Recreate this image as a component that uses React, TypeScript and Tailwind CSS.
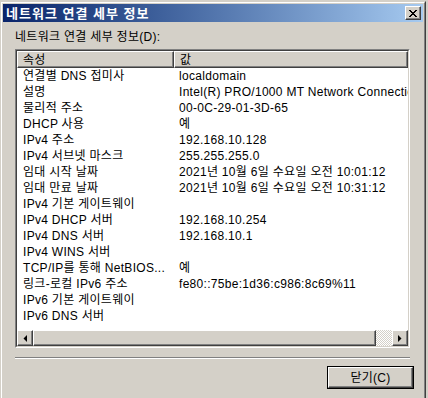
const rows: [string, string][] = [
  ["연결별 DNS 접미사", "localdomain"],
  ["설명", "Intel(R) PRO/1000 MT Network Connection"],
  ["물리적 주소", "00-0C-29-01-3D-65"],
  ["DHCP 사용", "예"],
  ["IPv4 주소", "192.168.10.128"],
  ["IPv4 서브넷 마스크", "255.255.255.0"],
  ["임대 시작 날짜", "2021년 10월 6일 수요일 오전 10:01:12"],
  ["임대 만료 날짜", "2021년 10월 6일 수요일 오전 10:31:12"],
  ["IPv4 기본 게이트웨이", ""],
  ["IPv4 DHCP 서버", "192.168.10.254"],
  ["IPv4 DNS 서버", "192.168.10.1"],
  ["IPv4 WINS 서버", ""],
  ["TCP/IP를 통해 NetBIOS...", "예"],
  ["링크-로컬 IPv6 주소", "fe80::75be:1d36:c986:8c69%11"],
  ["IPv6 기본 게이트웨이", ""],
  ["IPv6 DNS 서버", ""],
];

const raised =
  "border border-t-white border-l-white border-r-[#404040] border-b-[#404040] shadow-[inset_-1px_-1px_0_#808080]";

function ArrowButton({ dir }: { dir: "left" | "right" }) {
  return (
    <div className={`flex h-[16px] w-[16px] shrink-0 items-center justify-center bg-[#d4d0c8] ${raised}`}>
      <svg width="4" height="7" viewBox="0 0 4 7">
        {dir === "left" ? (
          <polygon points="4,0 4,7 0.5,3.5" fill="#000" />
        ) : (
          <polygon points="0,0 0,7 3.5,3.5" fill="#000" />
        )}
      </svg>
    </div>
  );
}

export default function App() {
  return (
    <div
      className="h-[398px] w-[428px] overflow-hidden bg-[#d4d0c8] text-[12px] tracking-[0.3px] text-black"
      style={{ fontFamily: '"Liberation Sans", "Noto Sans CJK KR", sans-serif' }}
    >
      <div className="mt-[1px] h-[420px] w-[426px] border border-t-[#d4d0c8] border-l-[#d4d0c8] border-r-[#404040] border-b-[#404040]">
        <div className="h-full w-full border border-t-white border-l-white border-r-[#808080] border-b-[#808080] p-[1px]">
          {/* title bar */}
          <div className="flex h-[18px] items-center justify-between bg-gradient-to-r from-[#0a246a] to-[#a6caf0] pl-[3px] pr-[2px]">
            <span className="text-[13px] font-bold leading-none tracking-[1px] text-white">
              네트워크 연결 세부 정보
            </span>
            <div className={`flex h-[14px] w-[16px] items-center justify-center bg-[#d4d0c8] ${raised}`}>
              <svg width="8" height="7" viewBox="0 0 8 7" shapeRendering="crispEdges">
                <path
                  d="M0 0h2v1h-2zM6 0h2v1h-2zM1 1h2v1h-2zM5 1h2v1h-2zM2 2h4v1h-4zM3 3h2v1h-2zM2 4h4v1h-4zM1 5h2v1h-2zM5 5h2v1h-2zM0 6h2v1h-2zM6 6h2v1h-2z"
                  fill="#000"
                />
              </svg>
            </div>
          </div>

          <div className="pl-[12px]">
            <div className="mt-[8px] h-[14px] leading-[14px]">네트워크 연결 세부 정보(D):</div>

            {/* list view */}
            <div className="mt-[5px] w-[395px] border border-t-[#808080] border-l-[#808080] border-r-white border-b-white">
              <div className="flex h-[297px] flex-col border border-t-[#404040] border-l-[#404040] border-r-[#d4d0c8] border-b-[#d4d0c8] bg-white">
                <div className="flex h-[17px] shrink-0">
                  <div className={`flex w-[157px] items-center bg-[#d4d0c8] pl-[5px] ${raised}`}>속성</div>
                  <div className={`flex flex-1 items-center bg-[#d4d0c8] pl-[5px] ${raised}`}>값</div>
                </div>
                <div className="flex-1 overflow-hidden">
                  {rows.map(([k, v]) => (
                    <div key={k} className="flex h-[16px] items-center whitespace-nowrap">
                      <div className="w-[157px] shrink-0 pl-[6px]">{k}</div>
                      <div className="pl-[5px]">{v}</div>
                    </div>
                  ))}
                </div>
                {/* horizontal scroll bar */}
                <div className="flex h-[16px] shrink-0">
                  <ArrowButton dir="left" />
                  <div className={`w-[343px] shrink-0 bg-[#d4d0c8] ${raised}`} />
                  <div className="flex-1 bg-[repeating-conic-gradient(#ffffff_0_25%,#d4d0c8_0_50%)] bg-[length:2px_2px]" />
                  <ArrowButton dir="right" />
                </div>
              </div>
            </div>

            {/* separator */}
            <div className="mt-[9px] h-[2px] w-[395px] border-t border-t-[#808080] border-b border-b-white" />

            <div className="mt-[7px] flex w-[399px] justify-end">
              <div className="h-[23px] w-[87px] border border-black">
                <div className={`flex h-full w-full items-center justify-center bg-[#d4d0c8] ${raised}`}>
                  닫기(C)
                </div>
              </div>
            </div>
          </div>
        </div>
      </div>
    </div>
  );
}
